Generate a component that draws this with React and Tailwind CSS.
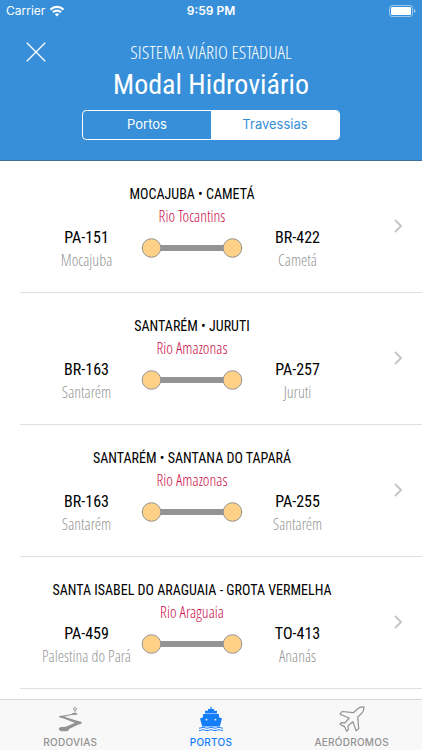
import clsx from "clsx";

const crossings = [
  {
    title: "MOCAJUBA • CAMETÁ",
    river: "Rio Tocantins",
    from: { road: "PA-151", city: "Mocajuba" },
    to: { road: "BR-422", city: "Cametá" },
  },
  {
    title: "SANTARÉM • JURUTI",
    river: "Rio Amazonas",
    from: { road: "BR-163", city: "Santarém" },
    to: { road: "PA-257", city: "Juruti" },
  },
  {
    title: "SANTARÉM • SANTANA DO TAPARÁ",
    river: "Rio Amazonas",
    from: { road: "BR-163", city: "Santarém" },
    to: { road: "PA-255", city: "Santarém" },
  },
  {
    title: "SANTA ISABEL DO ARAGUAIA - GROTA VERMELHA",
    river: "Rio Araguaia",
    from: { road: "PA-459", city: "Palestina do Pará" },
    to: { road: "TO-413", city: "Ananás" },
  },
];

const RoadIcon = () => (
  <svg viewBox="0 0 26 26" className="h-[26px] w-[26px]" fill="currentColor" aria-hidden="true">
    <circle cx="18" cy="3" r="1.400" fill="none" stroke="currentColor" strokeWidth="0.9" />
    <path d="M17.600 4.500h.8v3h-.8z" />
    <ellipse cx="17.500" cy="8" rx="3" ry="0.900" />
    <ellipse cx="5" cy="10.800" rx="3.200" ry="1" />
    <ellipse cx="21.500" cy="16.700" rx="3.200" ry="1.500" />
    <ellipse cx="7" cy="23" rx="5.200" ry="2.300" />
    <path d="M16 7.700 4.500 10.100l1 .9L17 8.600zM5 10l-1 1.600 17 6.400 1.500-2.400zM20.500 15.800 8 21l2.500 2.800 12-5.800z" />
  </svg>
);

const ShipIcon = () => (
  <svg viewBox="0 0 26 26" className="h-[26px] w-[26px]" fill="currentColor" aria-hidden="true">
    <path d="M12.400.800h1.200v2.200h2.400v1.800h3v2.700H7V4.800h3V3h2.400z" />
    <path
      fillRule="evenodd"
      d="M5 8h16v3.300l3 1.200-2.200 7.900H4.200L2 12.500l3-1.200zM8.500 12.800a.9.900 0 1 0 0 1.800.9.900 0 0 0 0-1.800zM17.500 12.800a.9.900 0 1 0 0 1.800.9.900 0 0 0 0-1.800z"
    />
    <path
      d="M1 22.200c2 0 2-.8 4-.8s2 .8 4 .8 2-.8 4-.8 2 .8 4 .8 2-.8 4-.8 2 .8 4 .8M1 24.600c2 0 2-.8 4-.8s2 .8 4 .8 2-.8 4-.8 2 .8 4 .8 2-.8 4-.8 2 .8 4 .8"
      fill="none"
      stroke="currentColor"
      strokeWidth="1"
    />
  </svg>
);

const PlaneIcon = () => (
  <svg
    viewBox="0 0 26 26"
    className="h-[26px] w-[26px]"
    fill="none"
    stroke="currentColor"
    strokeWidth="1.200"
    strokeLinejoin="round"
    aria-hidden="true"
  >
    <path d="M24.900.900c-2.800-.2-4.900.5-6.800 2.300l-3.700 3.500L3.100 5.500 1 8.200l9.100 3.800-4 4.900-3.900-.3L.9 18.300l4.600 2.300 2.200 4.700 1.600-1.600-.2-4 4.700-4 3.400 9.100 2.500-2.200-1-11.500 3.800-3.600c1.800-1.800 2.600-3.900 2.400-6.600z" />
  </svg>
);

const tabs = [
  { name: "RODOVIAS", icon: RoadIcon },
  { name: "PORTOS", icon: ShipIcon, active: true },
  { name: "AERÓDROMOS", icon: PlaneIcon },
];

const StatusBar = () => (
  <div className="grid h-5 grid-cols-3 items-center px-1.5 pt-0.5 text-xs">
    <div className="flex items-center gap-1">
      <span>Carrier</span>
      <svg viewBox="0 0 16 12" className="h-3 w-4" fill="none" stroke="currentColor" strokeWidth="2.200" aria-hidden="true">
        <path d="M1.500 4.600a9.200 9.200 0 0 1 13 0M4 7.300a5.700 5.700 0 0 1 8 0" />
        <path d="M8 11.600 5.800 9.300a3.200 3.200 0 0 1 4.400 0z" fill="currentColor" stroke="none" />
      </svg>
    </div>
    <span className="text-center font-semibold">9:59 PM</span>
    <svg viewBox="0 0 27 12" className="h-3 w-[27px] justify-self-end" aria-hidden="true">
      <rect x="0.500" y="0.500" width="23" height="11" rx="2.500" fill="none" stroke="white" strokeOpacity="0.5" />
      <rect x="2" y="2" width="20" height="8" rx="1" fill="white" />
      <path d="M25 4v4c1.200-.4 1.600-1.200 1.600-2S26.200 4.400 25 4z" fill="white" fillOpacity="0.5" />
    </svg>
  </div>
);

const Header = () => (
  <header className="border-b border-[#3d6f9f] bg-[#368fd8] pb-5 text-white">
    <StatusBar />
    <div className="grid grid-cols-[72px_1fr_72px] pt-5">
      <button aria-label="Fechar" className="flex h-6 items-center justify-center">
        <svg viewBox="0 0 20 20" className="h-5 w-5" stroke="currentColor" strokeWidth="1.300" aria-hidden="true">
          <path d="M.8.800 19.200 19.200M19.200.800.800 19.200" />
        </svg>
      </button>
      <div className="text-center font-['Avenir_Next_Condensed','Roboto_Condensed',sans-serif]">
        <p className="font-['Avenir_Next_Condensed','Open_Sans_Condensed_Light',sans-serif] text-[19px] leading-6">
          SISTEMA VIÁRIO ESTADUAL
        </p>
        <h1 className="text-[28px] leading-[42px]">Modal Hidroviário</h1>
      </div>
    </div>
    <div className="mx-auto mt-1 flex h-[30px] w-[258px] overflow-hidden rounded border border-white text-[13px]">
      <button className="flex-1">Portos</button>
      <button className="flex-1 bg-white text-[#368fd8]">Travessias</button>
    </div>
  </header>
);

const Endpoint = ({ road, city }) => (
  <div className="flex-1 text-center">
    <p className="text-base leading-6 whitespace-nowrap">{road}</p>
    <p className="font-['Avenir_Next_Condensed','Open_Sans_Condensed_Light',sans-serif] text-base leading-5 whitespace-nowrap text-[#969696]">
      {city}
    </p>
  </div>
);

const CrossingLine = () => (
  <svg viewBox="0 0 102 20" className="mt-3 h-5 w-[102px]" aria-hidden="true">
    <path d="M10 10h82" stroke="#949494" strokeWidth="6" />
    <circle cx="10.500" cy="10" r="9.300" fill="#ffd187" stroke="#949494" />
    <circle cx="91.500" cy="10" r="9.300" fill="#ffd187" stroke="#949494" />
  </svg>
);

const Crossing = ({ title, river, from, to }) => (
  <li className="ml-5 border-b border-[#dfdfe1]">
    <a href="#" className="flex items-center pt-[21px] pr-5 pb-[22px]">
      <div className="flex-1 pr-[30px] font-['Avenir_Next_Condensed','Roboto_Condensed',sans-serif]">
        <h2 className="text-center text-sm leading-6 whitespace-nowrap">{title}</h2>
        <p className="text-center font-['Avenir_Next_Condensed','Open_Sans_Condensed_Light',sans-serif] text-base leading-5 text-[#cc0f4c]">
          {river}
        </p>
        <div className="flex px-3">
          <Endpoint {...from} />
          <CrossingLine />
          <Endpoint {...to} />
        </div>
      </div>
      <svg viewBox="0 0 8 14" className="h-3.5 w-2" fill="none" stroke="#c7c7cc" strokeWidth="2" aria-hidden="true">
        <path d="m1 1 6 6-6 6" />
      </svg>
    </a>
  </li>
);

const TabBar = () => (
  <nav className="grid grid-cols-3 border-t border-[#d5d5d7] bg-[#f8f8f8] pt-1.5">
    {tabs.map(({ name, icon: Icon, active }) => (
      <a
        key={name}
        href="#"
        className={clsx(
          "flex flex-col items-center gap-0.5 text-[10px] leading-4 font-medium tracking-wide",
          active ? "text-[#147efb]" : "text-[#929292]"
        )}
      >
        <Icon />
        <span>{name}</span>
      </a>
    ))}
  </nav>
);

const App = () => (
  <div className="flex h-screen flex-col bg-white font-[Inter,sans-serif] text-black">
    <Header />
    <main className="flex-1 overflow-y-auto">
      <ul>
        {crossings.map((crossing) => (
          <Crossing key={crossing.title} {...crossing} />
        ))}
      </ul>
    </main>
    <TabBar />
  </div>
);

export default App;
